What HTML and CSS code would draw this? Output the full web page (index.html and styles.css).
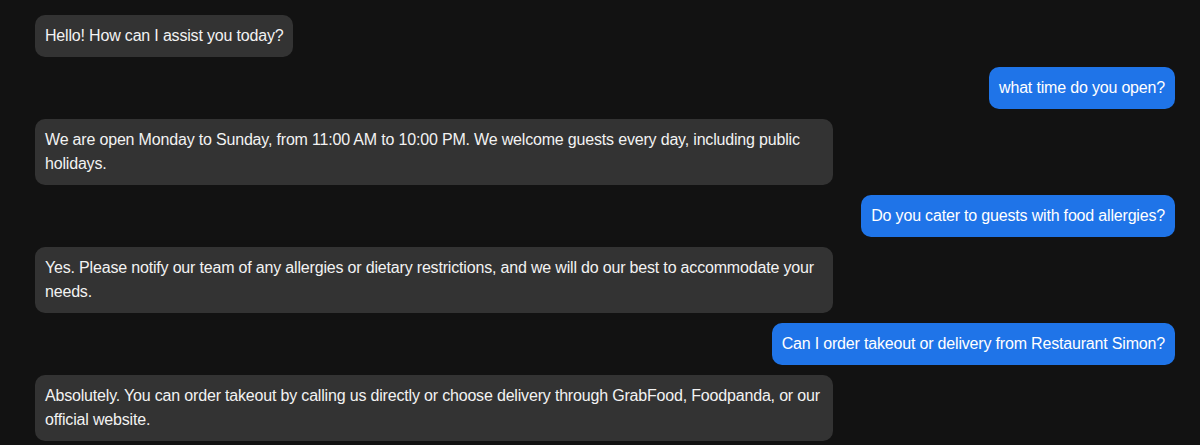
FILE: index.html
```html
<!DOCTYPE html>
<html lang="en">
<head>
<meta charset="utf-8">
<title>Chat</title>
<link rel="stylesheet" href="styles.css">
</head>
<body>
<div class="chat">
  <div class="msg bot">Hello! How can I assist you today?</div>
  <div class="msg user">what time do you open?</div>
  <div class="msg bot">We are open Monday to Sunday, from 11:00 AM to 10:00 PM. We welcome guests every day, including public holidays.</div>
  <div class="msg user">Do you cater to guests with food allergies?</div>
  <div class="msg bot">Yes. Please notify our team of any allergies or dietary restrictions, and we will do our best to accommodate your needs.</div>
  <div class="msg user">Can I order takeout or delivery from Restaurant Simon?</div>
  <div class="msg bot">Absolutely. You can order takeout by calling us directly or choose delivery through GrabFood, Foodpanda, or our official website.</div>
</div>
</body>
</html>
```
FILE: styles.css
```css
html, body {
  margin: 0;
  padding: 0;
  background: #121212;
  height: 100%;
  overflow: hidden;
}
.chat {
  display: flex;
  flex-direction: column;
  gap: 10px;
  padding: 15px 25px 0 35px;
  font-family: "Liberation Sans", Arial, sans-serif;
  font-size: 16px;
  line-height: 24px;
  letter-spacing: -0.18px;
}
.msg {
  max-width: 70%;
  box-sizing: border-box;
  padding: 9px 10px;
  border-radius: 10px;
  color: #f2f2f2;
}
.bot {
  align-self: flex-start;
  background: #333333;
}
.user {
  align-self: flex-end;
  background: #1f74e8;
  color: #ffffff;
}
```
